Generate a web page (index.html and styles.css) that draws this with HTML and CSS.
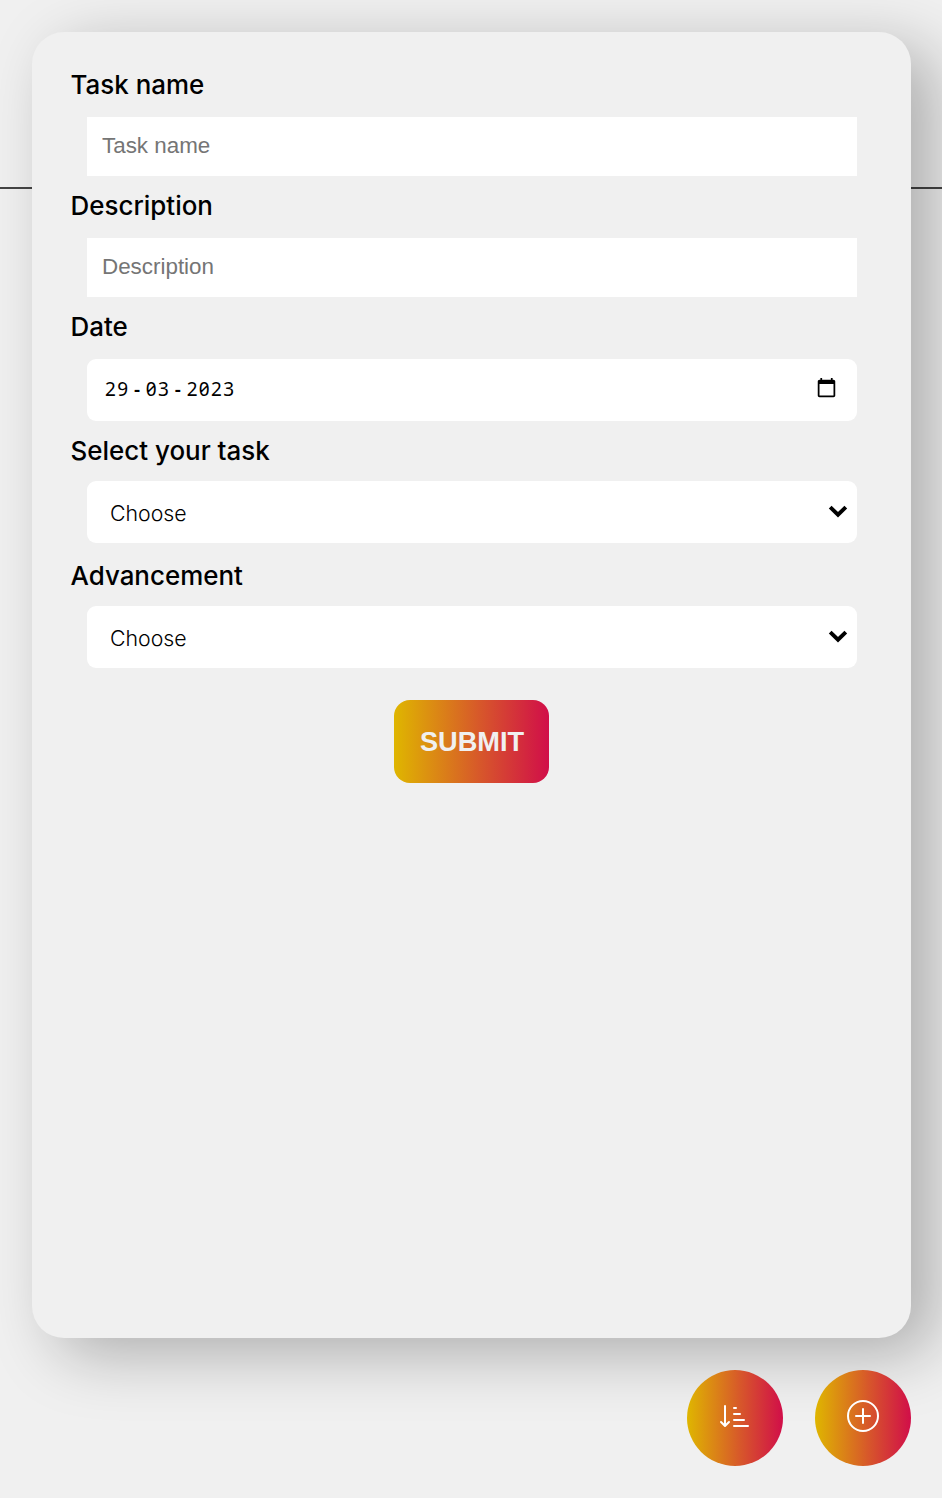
FILE: index.html
```html
<!DOCTYPE html>
<html lang="en">
<head>
<meta charset="utf-8">
<title>Add task</title>
<link rel="stylesheet" href="styles.css">
</head>
<body>
<div class="backdrop-line"></div>
<main class="modal">
  <form class="form">
    <label class="label" for="name">Task name</label>
    <input class="field text" id="name" placeholder="Task name">
    <label class="label" for="desc">Description</label>
    <input class="field text" id="desc" placeholder="Description">
    <label class="label">Date</label>
    <div class="field control date">
      <span class="digits"><span>29</span><span class="dash">-</span><span>03</span><span class="dash">-</span><span>2023</span></span>
      <svg class="calendar" viewBox="0 0 24 24"><path d="M20 3h-1V1h-2v2H7V1H5v2H4c-1.100 0-2 .9-2 2v16c0 1.100.9 2 2 2h16c1.100 0 2-.9 2-2V5c0-1.100-.9-2-2-2zm0 18H4V8h16v13z"/></svg>
    </div>
    <label class="label compact">Select your task</label>
    <div class="field control select">Choose
      <svg class="chevron" viewBox="0 0 18 12"><path d="M1.800 2 9 9l7.200-7"/></svg>
    </div>
    <label class="label compact">Advancement</label>
    <div class="field control select">Choose
      <svg class="chevron" viewBox="0 0 18 12"><path d="M1.800 2 9 9l7.200-7"/></svg>
    </div>
    <button class="submit" type="button">SUBMIT</button>
  </form>
</main>
<div class="actions">
  <button class="round" type="button" aria-label="Sort"><svg class="sort" viewBox="0 0 16 16"><path d="M3.500 2.500a.5.5 0 0 0-1 0v8.793l-1.146-1.147a.5.5 0 0 0-.708.708l2 1.999.007.007a.497.497 0 0 0 .7-.006l2-2a.5.5 0 0 0-.707-.708L3.500 11.293V2.500zm3.500 1a.5.5 0 0 1 .5-.5h1a.5.5 0 0 1 0 1h-1a.5.5 0 0 1-.5-.5zM7.500 6a.5.5 0 0 0 0 1h3a.5.5 0 0 0 0-1h-3zm0 3a.5.5 0 0 0 0 1h5a.5.5 0 0 0 0-1h-5zm0 3a.5.5 0 0 0 0 1h7a.5.5 0 0 0 0-1h-7z"/></svg></button>
  <button class="round" type="button" aria-label="Add"><svg viewBox="0 0 16 16"><path d="M8 15A7 7 0 1 1 8 1a7 7 0 0 1 0 14zm0 1A8 8 0 1 0 8 0a8 8 0 0 0 0 16z"/><path d="M8 4a.5.5 0 0 1 .5.5v3h3a.5.5 0 0 1 0 1h-3v3a.5.5 0 0 1-1 0v-3h-3a.5.5 0 0 1 0-1h3v-3A.5.5 0 0 1 8 4z"/></svg></button>
</div>
</body>
</html>
```
FILE: styles.css
```css
* { box-sizing: border-box; }
body {
  margin: 0;
  height: 1498px;
  padding: 32px 31px 0 32px;
  overflow: hidden;
  background: #f0f0f0;
  font-family: Inter, sans-serif;
}
.backdrop-line {
  position: absolute;
  z-index: -1;
  top: 187px;
  left: 0;
  width: 100%;
  height: 2px;
  background: #444;
}
.modal {
  height: 1306px;
  padding: 37px 54.500px 0 38.500px;
  border-radius: 32px;
  background: #f0f0f0;
  box-shadow: 24px 16px 64px rgba(0, 0, 0, .28);
}
.form { display: flex; flex-direction: column; }
.label {
  height: 32px;
  margin-bottom: 16px;
  font-size: 25.950px;
  font-weight: 500;
  line-height: 32px;
}
.compact { margin-bottom: 15px; line-height: 34px; }
.field {
  margin-left: 16.500px;
  margin-bottom: 14.500px;
  border: 0;
  background: #fff;
  font-family: "Liberation Sans", sans-serif;
  font-size: 22.400px;
}
.text { height: 58.500px; padding: 0 15px 1px; border-radius: 0; }
.text::placeholder { color: #757575; opacity: 1; }
.control {
  display: flex;
  align-items: center;
  justify-content: space-between;
  height: 62px;
  border-radius: 9px;
}
.date { margin-bottom: 13.200px; padding: 0 20px 2px 18px; }
.digits {
  display: flex;
  font-family: "Noto Sans", sans-serif;
  font-size: 19px;
  font-feature-settings: "zero";
  letter-spacing: 1.350px;
}
.dash { width: 16.400px; text-align: center; font-weight: 600; }
.calendar { width: 21px; height: 21px; margin-top: -3px; }
.select {
  margin-bottom: 15.900px;
  padding: 1px 9px 0 23px;
  font-family: Inter, sans-serif;
  font-size: 21.300px;
  font-weight: 350;
}
.chevron { width: 20px; height: 13px; margin-top: -2px; fill: none; stroke: #000; stroke-width: 3.600; }
.submit {
  align-self: center;
  width: 155px;
  height: 83px;
  margin: 16px 0 0 16px;
  padding: 1px 0 0 1px;
  border: 0;
  border-radius: 16px;
  background: linear-gradient(90deg, #dfb600, #d7582a 55%, #d10e49);
  color: #f0f0f0;
  font: bold 27.200px "Liberation Sans", sans-serif;
}
.actions { display: flex; justify-content: flex-end; gap: 32px; margin-top: 32px; }
.round {
  display: grid;
  place-items: center;
  width: 96px;
  height: 96px;
  padding: 0 0 4px;
  border: 0;
  border-radius: 50%;
  background: linear-gradient(90deg, #dfb600, #d7582a 55%, #d10e49);
}
.round svg { width: 32px; height: 32px; fill: #fff; }
.round .sort { margin-top: 2px; }
```
